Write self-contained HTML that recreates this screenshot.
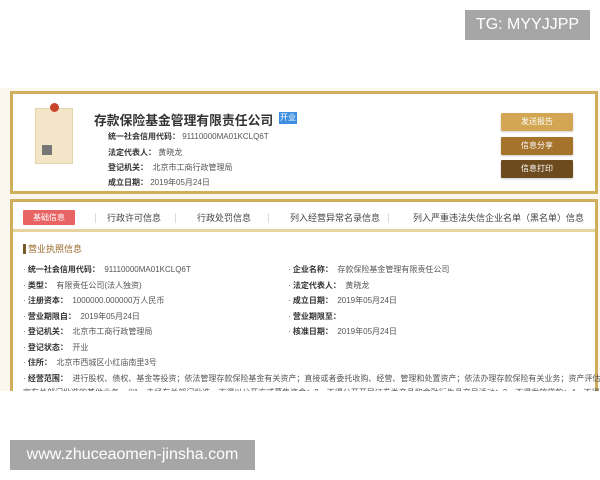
<!DOCTYPE html>
<html><head><meta charset="utf-8"><style>
*{margin:0;padding:0;box-sizing:border-box}
body{width:600px;height:480px;background:#fff;position:relative;overflow:hidden;font-family:"Liberation Sans","Noto Sans CJK SC",sans-serif;color:#333}
.wm1{position:absolute;left:465px;top:10px;width:125px;height:30px;background:#a6a6a6;color:#fff;font-size:16px;line-height:30px;text-align:center}
.wm2{position:absolute;left:10px;top:440px;width:245px;height:30px;background:#a6a6a6;color:#fff;font-size:16px;line-height:30px;text-align:center}
.clip{position:absolute;left:0;top:88px;width:600px;height:303px;overflow:hidden;background:#fbf7ee}
.c1{position:absolute;left:10px;top:3px;width:588px;height:103px;border:3px solid #cfae5c;background:#fff}
.c2{position:absolute;left:10px;top:111px;width:588px;height:300px;border:3px solid #cfae5c;background:#fff}
.lic{position:absolute;left:22px;top:14px;width:38px;height:56px;background:#f3e6c8;border:1px solid #e3d3ab}
.lic:before{content:"";position:absolute;left:14px;top:-6px;width:9px;height:9px;border-radius:50%;background:#c8442a}
.lic:after{content:"";position:absolute;left:6px;top:36px;width:10px;height:10px;background:#777}
.title{position:absolute;left:81px;top:16px;font-size:12.8px;font-weight:bold;color:#333;white-space:nowrap}
.tag{position:absolute;left:266px;top:18px;width:18px;height:12px;background:#3d8ee0;color:#fff;font-size:8px;text-align:center;line-height:12px}
.kv{position:absolute;left:95px;font-size:8px;color:#555}
.kv b{color:#333}
.btn{position:absolute;left:488px;width:72px;height:18px;color:#fff;font-size:8px;text-align:center;line-height:18px;border-radius:1px;box-shadow:0 1px 2px rgba(0,0,0,.2)}
.tabs{position:absolute;left:0;top:0;width:582px;height:30px;border-bottom:3px solid #e6d3a0}
.tab{position:absolute;top:9px;font-size:9px;color:#444}
.act{position:absolute;left:10px;top:8px;width:52px;height:15px;background:#e86464;color:#fff;font-size:8px;text-align:center;line-height:15px;border-radius:1px}
.sep{position:absolute;top:11px;width:1px;height:10px;background:#ddd}
.hd{position:absolute;left:10px;top:42px;font-size:9px;color:#9a6a2a;border-left:3px solid #7a5a2a;padding-left:2px;line-height:10px}
.r{position:absolute;font-size:8px;color:#555;white-space:nowrap}
.r b{color:#333}
</style></head><body>
<div class="wm1">TG: MYYJJPP</div>
<div class="clip">
 <div class="c1">
  <div class="lic"></div>
  <div class="title">存款保险基金管理有限责任公司</div>
  <div class="tag">开业</div>
  <div class="kv" style="top:37px"><b>统一社会信用代码：</b> 91110000MA01KCLQ6T</div>
  <div class="kv" style="top:53px"><b>法定代表人：</b> 黄晓龙</div>
  <div class="kv" style="top:68px"><b>登记机关：</b>&nbsp; 北京市工商行政管理局</div>
  <div class="kv" style="top:83px"><b>成立日期：</b> 2019年05月24日</div>
  <div class="btn" style="top:19px;background:#d2a652">发送报告</div>
  <div class="btn" style="top:43px;background:#a6732c">信息分享</div>
  <div class="btn" style="top:66px;background:#6d4b1e">信息打印</div>
 </div>
 <div class="c2">
  <div class="tabs">
   <div class="act">基础信息</div>
   <div class="sep" style="left:82px"></div>
   <div class="tab" style="left:94px">行政许可信息</div>
   <div class="sep" style="left:162px"></div>
   <div class="tab" style="left:184px">行政处罚信息</div>
   <div class="sep" style="left:255px"></div>
   <div class="tab" style="left:277px">列入经营异常名录信息</div>
   <div class="sep" style="left:375px"></div>
   <div class="tab" style="left:400px">列入严重违法失信企业名单（黑名单）信息</div>
  </div>
  <div class="hd">营业执照信息</div>
  <div class="r" style="left:10px;top:62px">· <b>统一社会信用代码：</b>&nbsp; 91110000MA01KCLQ6T</div>
  <div class="r" style="left:275px;top:62px">· <b>企业名称：</b>&nbsp; 存款保险基金管理有限责任公司</div>
  <div class="r" style="left:10px;top:78px">· <b>类型：</b>&nbsp; 有限责任公司(法人独资)</div>
  <div class="r" style="left:275px;top:78px">· <b>法定代表人：</b>&nbsp; 黄晓龙</div>
  <div class="r" style="left:10px;top:93px">· <b>注册资本：</b>&nbsp; 1000000.000000万人民币</div>
  <div class="r" style="left:275px;top:93px">· <b>成立日期：</b>&nbsp; 2019年05月24日</div>
  <div class="r" style="left:10px;top:109px">· <b>营业期限自：</b>&nbsp; 2019年05月24日</div>
  <div class="r" style="left:275px;top:109px">· <b>营业期限至：</b></div>
  <div class="r" style="left:10px;top:124px">· <b>登记机关：</b>&nbsp; 北京市工商行政管理局</div>
  <div class="r" style="left:275px;top:124px">· <b>核准日期：</b>&nbsp; 2019年05月24日</div>
  <div class="r" style="left:10px;top:140px">· <b>登记状态：</b>&nbsp; 开业</div>
  <div class="r" style="left:10px;top:155px">· <b>住所：</b>&nbsp; 北京市西城区小红庙南里3号</div>
  <div class="r" style="left:10px;top:171px">· <b>经营范围：</b>&nbsp; 进行股权、债权、基金等投资；依法管理存款保险基金有关资产；直接或者委托收购、经营、管理和处置资产；依法办理存款保险有关业务；资产评估；国</div>
  <div class="r" style="left:10px;top:185px">家有关部门批准的其他业务。（"1、未经有关部门批准，不得以公开方式募集资金；2、不得公开开展证券类产品和金融衍生品交易活动；3、不得发放贷款；4、不得对所</div>
 </div>
</div>
<div class="wm2">www.zhuceaomen-jinsha.com</div>
</body></html>
